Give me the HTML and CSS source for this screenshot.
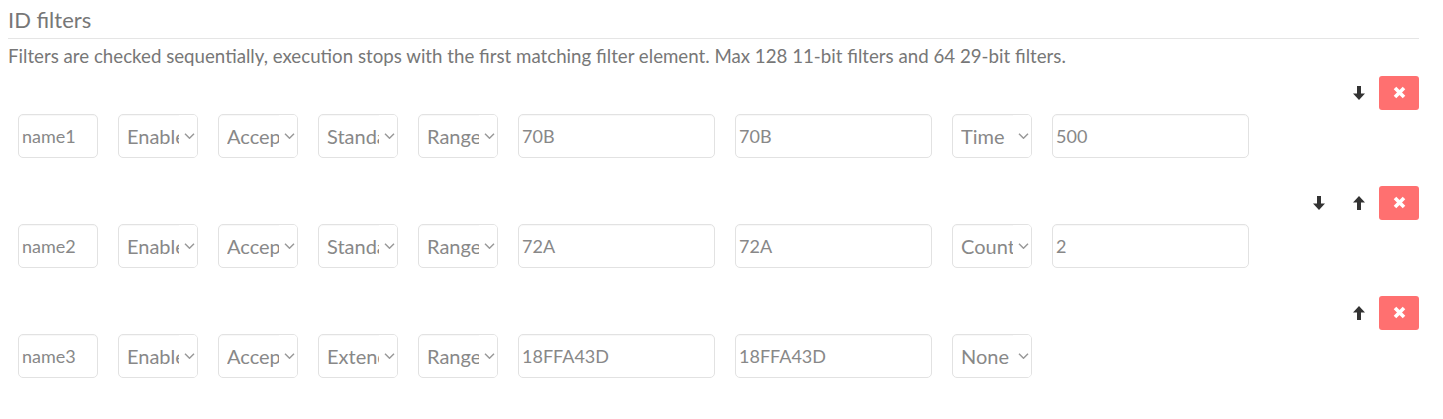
FILE: index.html
```html
<!DOCTYPE html>
<html lang="en">

<head>
    <meta charset="UTF-8">
    <title>ID filters</title>
    <link rel="stylesheet" href="styles.css">
</head>

<body>
    <h2 class="section-title">ID filters</h2>
    <p class="section-help">Filters are checked sequentially, execution stops with the first matching filter element. Max 128 11-bit filters and 64 29-bit filters.</p>

    <!-- filter 1 -->
    <div class="filter">
        <div class="filter-actions">
            <button class="btn-move" title="Move down">
                <svg width="12" height="14" viewBox="0 0 12 14"><path d="M4 0h4v7.5h4L6 14 0 7.5h4z" fill="#333"/></svg>
            </button>
            <button class="btn-delete" title="Delete">
                <svg width="13" height="13" viewBox="0 0 13 13"><path d="M2 2l9 9M11 2l-9 9" stroke="#fff" stroke-width="3.6"/></svg>
            </button>
        </div>
        <div class="filter-fields">
            <div class="cell"><input type="text" value="name1"></div>
            <div class="cell"><div class="select-wrap"><select><option>Enable</option></select><span class="chevron"><svg width="11" height="6" viewBox="0 0 11 6"><path d="M1 0.8l4.5 4.4 4.5-4.4" stroke="#999" stroke-width="1.5" fill="none"/></svg></span></div></div>
            <div class="cell"><div class="select-wrap"><select><option>Accept</option></select><span class="chevron"><svg width="11" height="6" viewBox="0 0 11 6"><path d="M1 0.8l4.5 4.4 4.5-4.4" stroke="#999" stroke-width="1.5" fill="none"/></svg></span></div></div>
            <div class="cell"><div class="select-wrap"><select><option>Standard</option></select><span class="chevron"><svg width="11" height="6" viewBox="0 0 11 6"><path d="M1 0.8l4.5 4.4 4.5-4.4" stroke="#999" stroke-width="1.5" fill="none"/></svg></span></div></div>
            <div class="cell"><div class="select-wrap"><select><option>Range</option></select><span class="chevron"><svg width="11" height="6" viewBox="0 0 11 6"><path d="M1 0.8l4.5 4.4 4.5-4.4" stroke="#999" stroke-width="1.5" fill="none"/></svg></span></div></div>
            <div class="cell wide"><input type="text" value="70B"></div>
            <div class="cell wide"><input type="text" value="70B"></div>
            <div class="cell"><div class="select-wrap"><select><option>Time</option></select><span class="chevron"><svg width="11" height="6" viewBox="0 0 11 6"><path d="M1 0.8l4.5 4.4 4.5-4.4" stroke="#999" stroke-width="1.5" fill="none"/></svg></span></div></div>
            <div class="cell wide"><input type="text" value="500"></div>
        </div>
    </div>

    <!-- filter 2 -->
    <div class="filter">
        <div class="filter-actions">
            <button class="btn-move" title="Move down">
                <svg width="12" height="14" viewBox="0 0 12 14"><path d="M4 0h4v7.5h4L6 14 0 7.5h4z" fill="#333"/></svg>
            </button>
            <button class="btn-move" title="Move up">
                <svg width="12" height="14" viewBox="0 0 12 14"><path d="M4 14h4V6.5h4L6 0 0 6.5h4z" fill="#333"/></svg>
            </button>
            <button class="btn-delete" title="Delete">
                <svg width="13" height="13" viewBox="0 0 13 13"><path d="M2 2l9 9M11 2l-9 9" stroke="#fff" stroke-width="3.6"/></svg>
            </button>
        </div>
        <div class="filter-fields">
            <div class="cell"><input type="text" value="name2"></div>
            <div class="cell"><div class="select-wrap"><select><option>Enable</option></select><span class="chevron"><svg width="11" height="6" viewBox="0 0 11 6"><path d="M1 0.8l4.5 4.4 4.5-4.4" stroke="#999" stroke-width="1.5" fill="none"/></svg></span></div></div>
            <div class="cell"><div class="select-wrap"><select><option>Accept</option></select><span class="chevron"><svg width="11" height="6" viewBox="0 0 11 6"><path d="M1 0.8l4.5 4.4 4.5-4.4" stroke="#999" stroke-width="1.5" fill="none"/></svg></span></div></div>
            <div class="cell"><div class="select-wrap"><select><option>Standard</option></select><span class="chevron"><svg width="11" height="6" viewBox="0 0 11 6"><path d="M1 0.8l4.5 4.4 4.5-4.4" stroke="#999" stroke-width="1.5" fill="none"/></svg></span></div></div>
            <div class="cell"><div class="select-wrap"><select><option>Range</option></select><span class="chevron"><svg width="11" height="6" viewBox="0 0 11 6"><path d="M1 0.8l4.5 4.4 4.5-4.4" stroke="#999" stroke-width="1.5" fill="none"/></svg></span></div></div>
            <div class="cell wide"><input type="text" value="72A"></div>
            <div class="cell wide"><input type="text" value="72A"></div>
            <div class="cell"><div class="select-wrap"><select><option>Count</option></select><span class="chevron"><svg width="11" height="6" viewBox="0 0 11 6"><path d="M1 0.8l4.5 4.4 4.5-4.4" stroke="#999" stroke-width="1.5" fill="none"/></svg></span></div></div>
            <div class="cell wide"><input type="text" value="2"></div>
        </div>
    </div>

    <!-- filter 3 -->
    <div class="filter">
        <div class="filter-actions">
            <button class="btn-move" title="Move up">
                <svg width="12" height="14" viewBox="0 0 12 14"><path d="M4 14h4V6.5h4L6 0 0 6.5h4z" fill="#333"/></svg>
            </button>
            <button class="btn-delete" title="Delete">
                <svg width="13" height="13" viewBox="0 0 13 13"><path d="M2 2l9 9M11 2l-9 9" stroke="#fff" stroke-width="3.6"/></svg>
            </button>
        </div>
        <div class="filter-fields">
            <div class="cell"><input type="text" value="name3"></div>
            <div class="cell"><div class="select-wrap"><select><option>Enable</option></select><span class="chevron"><svg width="11" height="6" viewBox="0 0 11 6"><path d="M1 0.8l4.5 4.4 4.5-4.4" stroke="#999" stroke-width="1.5" fill="none"/></svg></span></div></div>
            <div class="cell"><div class="select-wrap"><select><option>Accept</option></select><span class="chevron"><svg width="11" height="6" viewBox="0 0 11 6"><path d="M1 0.8l4.5 4.4 4.5-4.4" stroke="#999" stroke-width="1.5" fill="none"/></svg></span></div></div>
            <div class="cell"><div class="select-wrap"><select><option>Extended</option></select><span class="chevron"><svg width="11" height="6" viewBox="0 0 11 6"><path d="M1 0.8l4.5 4.4 4.5-4.4" stroke="#999" stroke-width="1.5" fill="none"/></svg></span></div></div>
            <div class="cell"><div class="select-wrap"><select><option>Range</option></select><span class="chevron"><svg width="11" height="6" viewBox="0 0 11 6"><path d="M1 0.8l4.5 4.4 4.5-4.4" stroke="#999" stroke-width="1.5" fill="none"/></svg></span></div></div>
            <div class="cell wide"><input type="text" value="18FFA43D"></div>
            <div class="cell wide"><input type="text" value="18FFA43D"></div>
            <div class="cell"><div class="select-wrap"><select><option>None</option></select><span class="chevron"><svg width="11" height="6" viewBox="0 0 11 6"><path d="M1 0.8l4.5 4.4 4.5-4.4" stroke="#999" stroke-width="1.5" fill="none"/></svg></span></div></div>
        </div>
    </div>
</body>

</html>
```

FILE: styles.css
```css
body {
    font-family: Lato, "Open Sans", sans-serif;
    margin: 7px 24px 8px 8px;
    padding: 0;
    background-color: #fff;
    color: #777;
}

.section-title {
    font-size: 22px;
    font-weight: normal;
    line-height: 1.2;
    color: #777;
    margin: 0;
    padding-bottom: 5px;
    border-bottom: 1px solid #e5e5e5;
}

.section-help {
    font-size: 18.7px;
    line-height: 1.2;
    color: #777;
    margin: 6px 0 8px 0;
}

.filter {
    margin-bottom: 28px;
}

.filter-actions {
    display: flex;
    justify-content: flex-end;
    height: 34px;
}

.filter-actions button {
    width: 40px;
    height: 34px;
    border: none;
    border-radius: 3px;
    padding: 0;
    display: flex;
    align-items: center;
    justify-content: center;
    cursor: pointer;
}

.btn-move {
    background-color: transparent;
}

.btn-delete {
    background-color: #ff7070;
}

.filter-fields {
    display: flex;
    margin-top: 4px;
}

.cell {
    width: 100px;
    padding: 0 10px;
    box-sizing: border-box;
    flex: none;
}

.cell.wide {
    width: 217px;
}

.cell input,
.cell select {
    width: 100%;
    height: 44px;
    box-sizing: border-box;
    border: 1px solid #e2e2e2;
    border-radius: 5px;
    box-shadow: inset 0 1px 1px rgba(0, 0, 0, 0.03);
    background-color: #fff;
    font-family: Lato, "Open Sans", sans-serif;
    font-size: 18px;
    color: #888;
    outline: none;
    margin: 0;
}

.cell input {
    padding: 0 3px;
}

.select-wrap {
    position: relative;
}

.cell select {
    appearance: none;
    -webkit-appearance: none;
    font-size: 20px;
    padding: 0 16px 0 8px;
}

/* covers the clipped end of the option text, like the native arrow box */
.chevron {
    position: absolute;
    top: 1px;
    right: 1px;
    bottom: 1px;
    width: 18px;
    background-color: #fff;
    border-radius: 0 4px 4px 0;
    display: flex;
    align-items: center;
    pointer-events: none;
}

.chevron svg {
    margin-left: 5px;
}
```
